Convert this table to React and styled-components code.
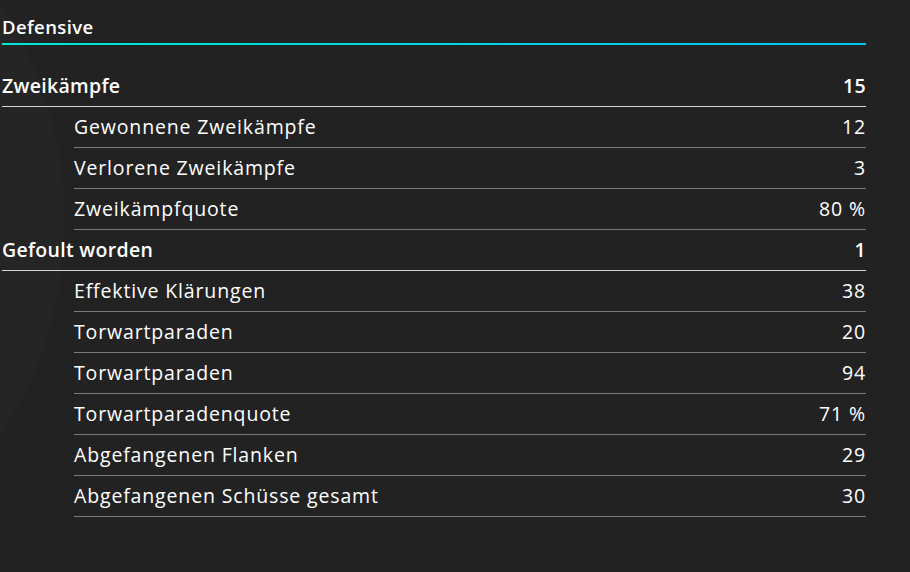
import React from "react";
import styled, { createGlobalStyle } from "styled-components";

const GlobalStyle = createGlobalStyle`
    html, body {
        margin: 0;
        padding: 0;
        height: 100%;
    }
    body {
        background:
            radial-gradient(ellipse 215px 300px at -150px 220px, #252525 0%, #252525 99%, transparent 100%),
            #222222;
        font-family: "Open Sans", Lato, sans-serif;
        color: #fff;
    }
`;

const stats = [
    { label: "Zweikämpfe", value: "15", main: true },
    { label: "Gewonnene Zweikämpfe", value: "12" },
    { label: "Verlorene Zweikämpfe", value: "3" },
    { label: "Zweikämpfquote", value: "80 %" },
    { label: "Gefoult worden", value: "1", main: true },
    { label: "Effektive Klärungen", value: "38" },
    { label: "Torwartparaden", value: "20" },
    { label: "Torwartparaden", value: "94" },
    { label: "Torwartparadenquote", value: "71 %" },
    { label: "Abgefangenen Flanken", value: "29" },
    { label: "Abgefangenen Schüsse gesamt", value: "30" },
];

function App() {
    return (
        <>
            <GlobalStyle />
            <Panel>
                <Header>
                    <HeaderTitle>Defensive</HeaderTitle>
                </Header>
                <StatList>
                    {stats.map((s, i) => (
                        <StatRow key={i} $main={s.main}>
                            <Label>{s.label}</Label>
                            <Value>{s.value}</Value>
                        </StatRow>
                    ))}
                </StatList>
            </Panel>
        </>
    );
}

const Panel = styled.div`
    width: 864px;
    margin-left: 2px;
    display: flex;
    flex-direction: column;
`;

const Header = styled.div`
    height: 45px;
    box-sizing: border-box;
    display: flex;
    align-items: flex-end;
    padding-bottom: 4px;
    border-bottom: 2px solid transparent;
    border-image: linear-gradient(90deg, #00e8d0 0%, #00c6f4 100%) 1;
`;

const HeaderTitle = styled.h2`
    margin: 0;
    font-size: 18.5px;
    font-weight: 600;
    letter-spacing: 0.4px;
    color: #fff;
`;

const StatList = styled.div`
    display: flex;
    flex-direction: column;
    margin-top: 21px;
`;

const StatRow = styled.div`
    height: 41px;
    box-sizing: border-box;
    padding-bottom: 2px;
    display: flex;
    justify-content: space-between;
    align-items: center;
    margin-left: ${(p) => (p.$main ? "0" : "72px")};
    border-bottom: 1px solid ${(p) => (p.$main ? "#d4d4d4" : "#7a7a7a")};
    font-size: 19.5px;
    letter-spacing: ${(p) => (p.$main ? "0.3px" : "0.85px")};
    font-weight: ${(p) => (p.$main ? 600 : 500)};
`;

const Label = styled.span`
    color: #fff;
`;

const Value = styled.span`
    color: #fff;
`;

export default App;
